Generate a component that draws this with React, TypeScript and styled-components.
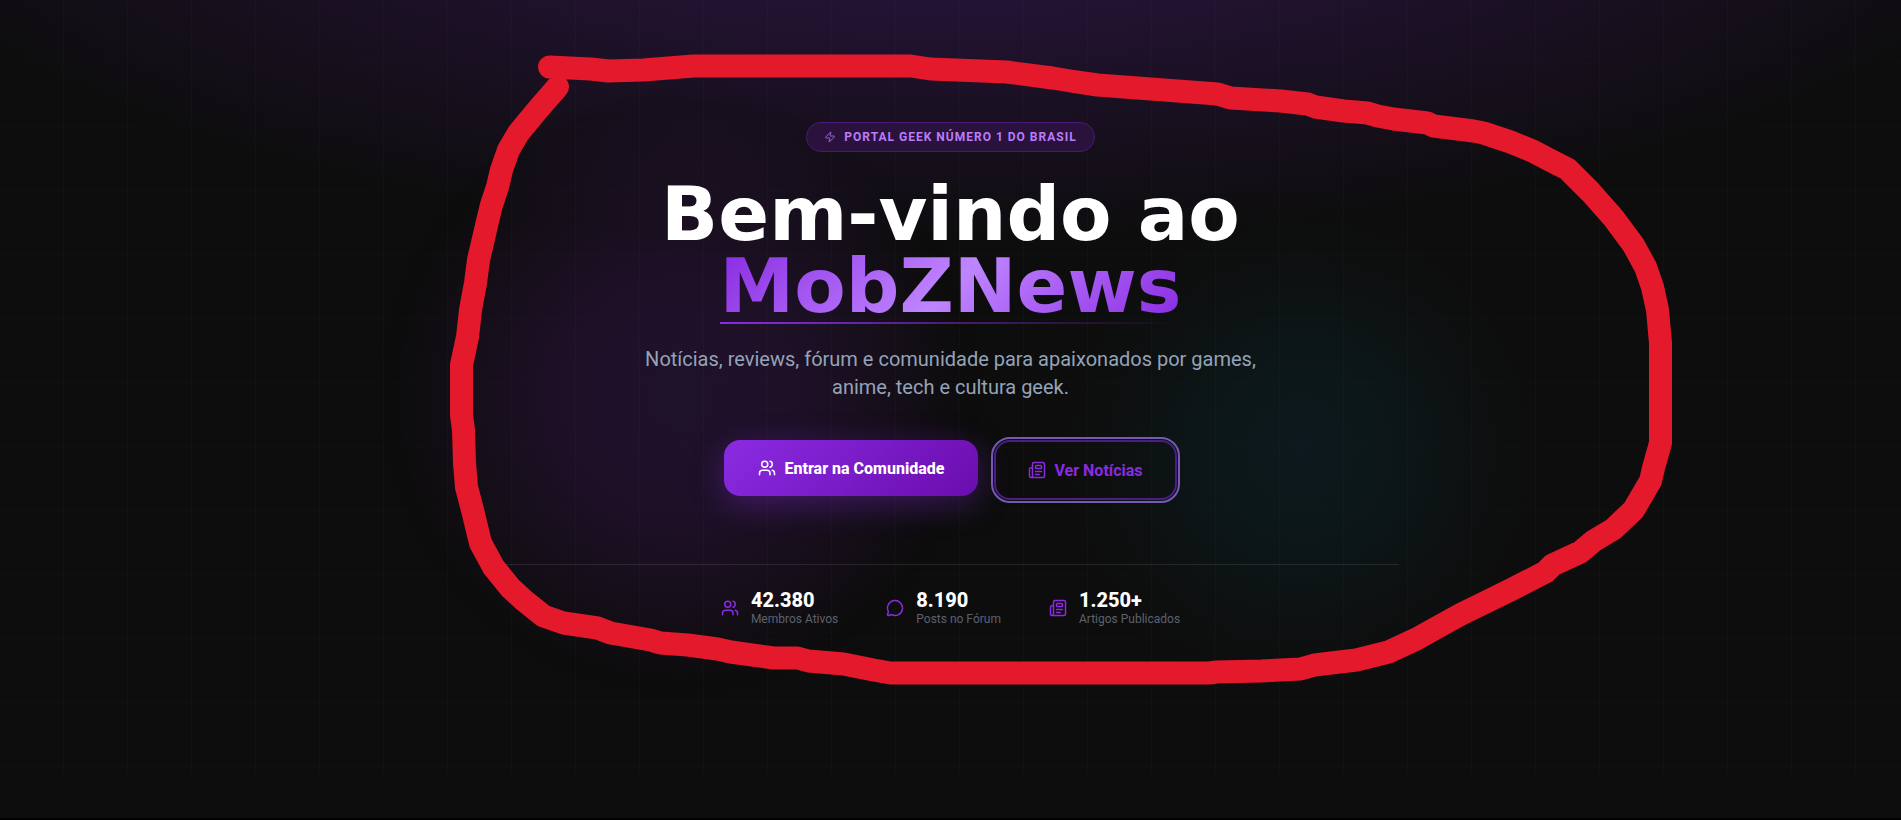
import React from 'react';
import styled, { createGlobalStyle } from 'styled-components';
import { MessageCircle, Newspaper, Users, Zap } from 'lucide-react';

const GlobalStyle = createGlobalStyle`
  *, *::before, *::after { box-sizing: border-box; }
  body {
    margin: 0;
    background: #000;
    font-family: Roboto, "Noto Sans", sans-serif;
    -webkit-font-smoothing: antialiased;
  }
`;

const Page = styled.div`
  position: relative;
  min-height: 100vh;
  display: flex;
  flex-direction: column;
  padding-bottom: 2px;
  overflow: hidden;
`;

const Hero = styled.main`
  position: relative;
  flex: 1;
  display: flex;
  flex-direction: column;
  align-items: center;
  padding: 122px 32px 48px;
  background:
    radial-gradient(circle 310px at calc(50% - 270px) 395px,
      rgba(138, 43, 226, 0.14) 0%, rgba(130, 35, 195, 0.14) 40%,
      rgba(120, 30, 170, 0.07) 70%, rgba(0, 0, 0, 0.08) 94%, transparent 100%),
    radial-gradient(circle 245px at calc(50% + 350px) 450px,
      rgba(6, 110, 150, 0.12) 0%, rgba(10, 110, 120, 0.1) 35%,
      rgba(10, 100, 120, 0.04) 70%, transparent 100%),
    radial-gradient(ellipse 60% 409px at 50% -164px,
      rgba(138, 43, 226, 0.3) 0%, transparent 100%),
    #0d0d0d;
`;

const Grid = styled.div`
  position: absolute;
  inset: 0 0 45px;
  pointer-events: none;
  background-image:
    linear-gradient(to left, rgba(88, 50, 200, 0.06) 1px, transparent 1px),
    linear-gradient(to top, rgba(88, 50, 200, 0.03) 1px, transparent 1px);
  background-size: 64px 64px;
`;

const Badge = styled.p`
  position: relative;
  display: flex;
  align-items: center;
  gap: 8px;
  height: 30px;
  margin: 0;
  padding: 0 17px;
  border: 1px solid #48197a;
  border-radius: 15px;
  background: #2a123c;
  color: #b97cfb;
  font-size: 12px;
  font-weight: 700;
  letter-spacing: 1px;
  text-transform: uppercase;
`;

const BadgeIcon = styled(Zap)`
  opacity: 0.8;
`;

const Title = styled.h1`
  position: relative;
  margin: 26px 0 0;
  color: #fff;
  font-family: "DejaVu Sans", sans-serif;
  font-size: 75px;
  font-weight: 700;
  line-height: 72px;
  text-align: center;
`;

const Brand = styled.span`
  position: relative;
  display: block;
  width: fit-content;
  margin: 0 auto;
  background: linear-gradient(135deg, #8a2be2, #bf85ff 50%, #8a2be2);
  background-clip: text;
  -webkit-background-clip: text;
  color: transparent;

  &::after {
    content: "";
    position: absolute;
    inset: auto 0 -2px;
    height: 2px;
    background: linear-gradient(to right, #8a2be2, transparent);
  }
`;

const Lead = styled.p`
  position: relative;
  max-width: 672px;
  margin: 23px 0 0;
  color: #94a3b8;
  font-size: 20px;
  line-height: 28px;
  text-align: center;
`;

const Actions = styled.div`
  position: relative;
  display: flex;
  align-items: flex-start;
  gap: 16px;
  margin-top: 39px;
`;

const Button = styled.button<{ $outlined?: boolean }>`
  display: flex;
  align-items: center;
  gap: 8px;
  height: ${(p) => (p.$outlined ? 60 : 56)}px;
  padding: 0 ${(p) => (p.$outlined ? 32 : 34)}px;
  border: ${(p) => (p.$outlined ? '2px solid #501b84' : '0')};
  border-radius: 16px;
  outline: ${(p) => (p.$outlined ? '2px solid #6f5db0' : 'none')};
  outline-offset: 1px;
  background: ${(p) => (p.$outlined ? 'transparent' : 'linear-gradient(135deg, #8a2be2, #6a0dad)')};
  box-shadow: ${(p) => (p.$outlined ? 'none' : '0 8px 32px rgba(138, 43, 226, 0.35)')};
  color: ${(p) => (p.$outlined ? '#8a2be2' : '#fff')};
  font-family: inherit;
  font-size: 16px;
  font-weight: ${(p) => (p.$outlined ? 700 : 800)};
  white-space: nowrap;
  cursor: pointer;
`;

const Stats = styled.ul`
  position: relative;
  display: flex;
  justify-content: center;
  gap: 48px;
  width: 100%;
  max-width: 896px;
  margin: 64px 0 0;
  padding: 24px 0 0;
  border-top: 1px solid rgba(255, 255, 255, 0.1);
  list-style: none;
`;

const Stat = styled.li`
  display: flex;
  align-items: center;
  gap: 12px;
  color: #8a2be2;
`;

const StatText = styled.div`
  display: flex;
  flex-direction: column;
`;

const Value = styled.strong`
  color: #fff;
  font-size: 20px;
  font-weight: 800;
  line-height: 22px;
`;

const Label = styled.span`
  color: #5b6270;
  font-size: 12px;
  line-height: 16px;
`;

const Marker = styled.svg`
  position: absolute;
  top: 0;
  left: 50%;
  width: 1901px;
  height: 820px;
  transform: translateX(-50%);
  pointer-events: none;
`;

const stats = [
  { icon: Users, value: '42.380', label: 'Membros Ativos' },
  { icon: MessageCircle, value: '8.190', label: 'Posts no Fórum' },
  { icon: Newspaper, value: '1.250+', label: 'Artigos Publicados' },
];

export default function App() {
  return (
    <Page>
      <GlobalStyle />
      <Hero>
        <Grid />
        <Badge>
          <BadgeIcon size={12} strokeWidth={2} aria-hidden />
          Portal Geek Número 1 do Brasil
        </Badge>
        <Title>
          Bem-vindo ao <Brand>MobZNews</Brand>
        </Title>
        <Lead>
          Notícias, reviews, fórum e comunidade para apaixonados por games, anime, tech e cultura geek.
        </Lead>
        <Actions>
          <Button type="button">
            <Users size={18} aria-hidden />
            Entrar na Comunidade
          </Button>
          <Button type="button" $outlined>
            <Newspaper size={18} aria-hidden />
            Ver Notícias
          </Button>
        </Actions>
        <Stats>
          {stats.map(({ icon: Icon, value, label }) => (
            <Stat key={label}>
              <Icon size={18} aria-hidden />
              <StatText>
                <Value>{value}</Value>
                <Label>{label}</Label>
              </StatText>
            </Stat>
          ))}
        </Stats>
      </Hero>
      <Marker viewBox="0 0 1901 820" aria-hidden>
        <path
          d="M549 67 L590 69 L608 71 L643 70 L693 66 L910 66 L930 69 L1006 72 L1052 78 L1070 81 L1097 85 L1217 94 L1230 98 L1280 101 L1307 104 L1315 107 L1343 111 L1367 113 L1377 116 L1393 119 L1427 123 L1433 126 L1473 131 L1483 133 L1510 142 L1532 151 L1553 162 L1567 169 L1590 192 L1613 218 L1633 245 L1645 267 L1652 287 L1657 310 L1660 343 L1660 443 L1653 468 L1650 481 L1633 510 L1613 529 L1593 541 L1580 552 L1552 565 L1545 572 L1510 590 L1461 614 L1450 620 L1416 639 L1388 652 L1356 660 L1314 665 L1300 669 L1261 671 L1216 672 L1209 673 L890 673 L873 670 L843 664 L808 661 L797 658 L773 658 L730 652 L717 649 L687 645 L660 643 L650 640 L610 633 L597 628 L563 623 L543 616 L523 600 L510 588 L493 567 L480 543 L472 510 L466 487 L464 463 L463 430 L461 415 L461 365 L467 337 L470 310 L475 283 L478 260 L482 243 L488 217 L491 205 L497 187 L501 170 L508 150 L518 133 L537 110 L557 87"
          fill="none"
          stroke="#e5192c"
          strokeWidth="23"
          strokeLinecap="round"
          strokeLinejoin="round"
        />
      </Marker>
    </Page>
  );
}
